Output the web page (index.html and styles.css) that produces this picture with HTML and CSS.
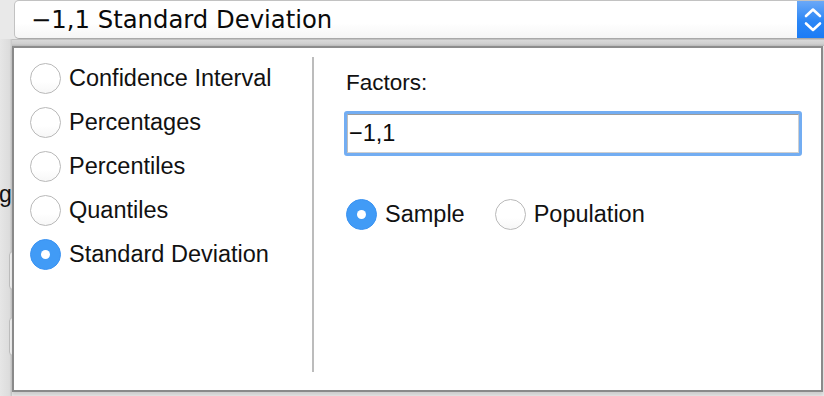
FILE: index.html
```html
<!DOCTYPE html>
<html lang="en">
<head>
  <meta charset="UTF-8" />
  <meta name="viewport" content="width=device-width,initial-scale=1" />
  <title>Interval Type</title>
  <link rel="stylesheet" href="styles.css">
</head>
<body>

  <div class="top">
    <div class="select">
      <span class="select-value">−1,1 Standard Deviation</span>
      <span class="stepper">
        <svg width="32" height="39" viewBox="0 0 32 39">
          <polyline points="9,16 16,9.5 23,16" fill="none" stroke="#fff" stroke-width="2.6" stroke-linejoin="round" stroke-linecap="round"/>
          <polyline points="9,23.5 16,30 23,23.5" fill="none" stroke="#fff" stroke-width="2.6" stroke-linejoin="round" stroke-linecap="round"/>
        </svg>
      </span>
    </div>
  </div>

  <div class="stage">
    <div class="behind">
      <span class="behind-g">g</span>
      <span class="behind-box"></span>
      <span class="behind-box"></span>
    </div>

    <div class="popup">
      <div class="popup-lip"></div>
      <div class="popup-body">
        <div class="options">
          <label class="option"><span class="radio"></span>Confidence Interval</label>
          <label class="option"><span class="radio"></span>Percentages</label>
          <label class="option"><span class="radio"></span>Percentiles</label>
          <label class="option"><span class="radio"></span>Quantiles</label>
          <label class="option"><span class="radio checked"></span>Standard Deviation</label>
        </div>
        <div class="divider"></div>
        <div class="settings">
          <div class="field-label">Factors:</div>
          <div class="field">
            <div class="field-inner">−1,1</div>
          </div>
          <div class="choice-row">
            <label class="choice"><span class="radio checked"></span>Sample</label>
            <label class="choice"><span class="radio"></span>Population</label>
          </div>
        </div>
      </div>
    </div>
  </div>

</body>
</html>
```

FILE: styles.css
```css
body {
  font-family: "Liberation Sans", Arial, sans-serif;
  background: #e9e9e9;
  margin: 0;
  padding: 0;
  width: 824px;
  height: 396px;
  overflow: hidden;
  color: #111;
}
.top {
  height: 39px;
  overflow: hidden;
}
.select {
  margin-left: 14px;
  width: 816px;
  height: 39px;
  box-sizing: border-box;
  border: 1px solid #c2c2c2;
  border-bottom-color: #a9a9a9;
  border-radius: 5px;
  background: linear-gradient(#ffffff, #ffffff 60%, #f5f5f5);
  display: flex;
  align-items: center;
  overflow: hidden;
}
.select-value {
  flex: 1;
  padding-left: 16px;
  font-family: "DejaVu Sans", "Liberation Sans", sans-serif;
  font-size: 24.3px;
  line-height: 37px;
  color: #0a0a0a;
}
.stepper {
  width: 32px;
  height: 39px;
  margin-top: -1px;
  background: linear-gradient(#6eaaf7, #2a86f6 55%, #1a7bf5);
  display: flex;
}
.stage {
  display: flex;
  height: 357px;
}
.behind {
  width: 12px;
  flex-shrink: 0;
  overflow: hidden;
  background: linear-gradient(to right, #e6e6e6, #dcdcdc 80%, #c6c6c6);
  display: flex;
  flex-direction: column;
}
.behind-g {
  margin-top: 141px;
  margin-left: -1px;
  font-size: 23px;
  line-height: 28px;
  color: #111;
}
.behind-box {
  display: block;
  margin-left: 9px;
  width: 20px;
  height: 37px;
  border: 1px solid #bdbdbd;
  border-radius: 4px;
  background: #f2f2f2;
  margin-top: 43px;
  flex-shrink: 0;
}
.behind-box + .behind-box {
  margin-top: 27px;
}
.popup {
  width: 812px;
  flex-shrink: 0;
  display: flex;
  flex-direction: column;
}
.popup-lip {
  height: 7px;
  background: linear-gradient(#b5b5b5, #d8d8d8 20%, #cfcfcf 70%, #b9b9b9);
}
.popup-body {
  height: 346px;
  box-sizing: border-box;
  width: 811px;
  background: #fff;
  border: 2px solid #8a8a8a;
  border-top-color: #8c8c8c;
  display: flex;
  box-shadow: 0 3px 3px rgba(0,0,0,0.12);
}
.options {
  width: 298px;
  padding-top: 8px;
  box-sizing: border-box;
}
.option {
  display: flex;
  align-items: center;
  gap: 8px;
  height: 44px;
  padding-left: 16px;
  font-size: 23.5px;
}
.radio {
  width: 31px;
  height: 31px;
  box-sizing: border-box;
  border-radius: 50%;
  border: 1px solid #b9b9b9;
  background: linear-gradient(#ffffff, #ffffff 60%, #f7f7f7);
  flex-shrink: 0;
  position: relative;
}
.radio.checked {
  border-color: #3b93f2;
  background: #419bf6;
}
.radio.checked::after {
  content: "";
  position: absolute;
  width: 9px;
  height: 9px;
  border-radius: 50%;
  background: #fff;
  top: 10px;
  left: 10px;
}
.divider {
  width: 2px;
  background: #bcbcbc;
  margin: 9px 0 18px;
}
.settings {
  flex: 1;
  padding: 21px 19px 0 32px;
}
.field-label {
  font-size: 22.5px;
  line-height: 28px;
  margin-bottom: 14px;
}
.field {
  margin-left: -2px;
  height: 45px;
  box-sizing: border-box;
  border: 3px solid #73adf2;
  border-radius: 3px;
}
.field-inner {
  height: 100%;
  box-sizing: border-box;
  border-top: 1px solid #9c9c9c;
  border-left: 1px solid #bdbdbd;
  border-right: 1px solid #cfcfcf;
  border-bottom: 1px solid #cfcfcf;
  padding-left: 1px;
  font-size: 23.5px;
  line-height: 36px;
  color: #0a0a0a;
}
.choice-row {
  display: flex;
  align-items: center;
  margin-top: 42px;
  height: 32px;
}
.choice {
  display: flex;
  align-items: center;
  gap: 8px;
  font-size: 23.5px;
  margin-right: 30px;
}
```
